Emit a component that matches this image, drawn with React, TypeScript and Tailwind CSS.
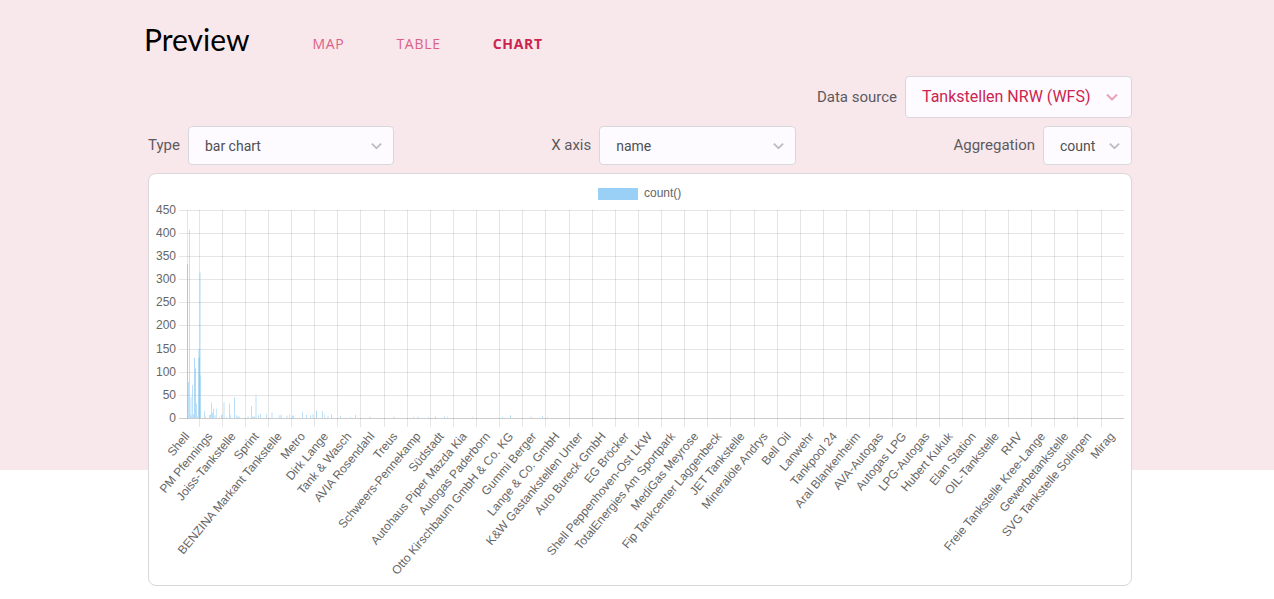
import React from "react";

const TABS = ["Map", "Table", "Chart"];

const LABELS = [
  "Shell",
  "PM Pfennings",
  "Joiss-Tankstelle",
  "Sprint",
  "BENZINA Markant Tankstelle",
  "Metro",
  "Dirk Lange",
  "Tank & Wasch",
  "AVIA Rosendahl",
  "Treus",
  "Schweers-Pennekamp",
  "Südstadt",
  "Autohaus Piper Mazda Kia",
  "Autogas Paderborn",
  "Otto Kirschbaum GmbH & Co. KG",
  "Gummi Berger",
  "Lange & Co. GmbH",
  "K&W Gastankstellen Unter",
  "Auto Bureck GmbH",
  "EG Bröcker",
  "Shell Peppenhoven-Ost LKW",
  "TotalEnergies Am Sportpark",
  "MediGas Meyrose",
  "Fip Tankcenter Laggenbeck",
  "JET Tankstelle",
  "Mineralöle Andrys",
  "Bell Oil",
  "Lanwehr",
  "Tankpool 24",
  "Aral Blankenheim",
  "AVA-Autogas",
  "Autogas LPG",
  "LPG-Autogas",
  "Hubert Kukuk",
  "Elan Station",
  "OIL-Tankstelle",
  "RHV",
  "Freie Tankstelle Kree-Lange",
  "Gewerbetankstelle",
  "SVG Tankstelle Solingen",
  "Mirag",
];

// [offset along the axis, count, width, opacity]
const BARS: [number, number, number, number][] = [
  [0, 332, 1, 0.7],
  [1, 77, 1, 0.5],
  [2, 406, 1, 0.5],
  [3, 45, 2, 0.25],
  [3, 8, 1, 0.4],
  [4, 5, 1, 0.3],
  [5, 71, 1, 0.5],
  [6, 8, 1, 0.5],
  [7, 130, 1, 0.6],
  [8, 107, 1, 0.6],
  [9, 31, 1, 0.5],
  [10, 3, 1, 0.5],
  [11, 149, 2, 0.3],
  [11, 130, 2, 0.4],
  [12, 314, 2, 0.3],
  [12, 130, 1, 0.3],
  [13, 92, 1, 0.4],
  [17, 15, 1, 0.5],
  [18, 3, 1, 0.5],
  [22, 7, 2, 0.5],
  [24, 33, 1, 0.5],
  [25, 11, 1, 0.5],
  [26, 20, 1, 0.5],
  [27, 6, 2, 0.3],
  [29, 20, 1, 0.4],
  [32, 3, 1, 0.3],
  [34, 7, 1, 0.5],
  [35, 7, 1, 0.3],
  [36, 34, 2, 0.25],
  [39, 3, 1, 0.3],
  [42, 31, 1, 0.5],
  [43, 7, 1, 0.4],
  [47, 44, 1, 0.55],
  [49, 6, 1, 0.5],
  [50, 3, 3, 0.4],
  [60, 3, 2, 0.3],
  [64, 26, 1, 0.5],
  [65, 3, 3, 0.5],
  [68, 49, 2, 0.25],
  [71, 6, 1, 0.5],
  [73, 9, 1, 0.5],
  [79, 8, 1, 0.5],
  [84, 12, 2, 0.25],
  [91, 6, 3, 0.25],
  [94, 7, 1, 0.4],
  [99, 5, 2, 0.25],
  [102, 8, 1, 0.4],
  [105, 5, 2, 0.5],
  [115, 13, 1, 0.5],
  [119, 7, 1, 0.5],
  [123, 6, 1, 0.5],
  [125, 8, 2, 0.25],
  [129, 16, 1, 0.6],
  [135, 15, 1, 0.5],
  [137, 8, 1, 0.4],
  [140, 5, 2, 0.25],
  [144, 8, 1, 0.5],
  [153, 5, 1, 0.5],
  [163, 3, 1, 0.3],
  [168, 7, 1, 0.5],
  [182, 3, 2, 0.25],
  [206, 3, 2, 0.25],
  [226, 3, 1, 0.4],
  [230, 3, 2, 0.25],
  [241, 3, 1, 0.3],
  [248, 3, 1, 0.6],
  [257, 4, 1, 0.4],
  [260, 3, 1, 0.4],
  [285, 3, 1, 0.3],
  [315, 3, 1, 0.5],
  [323, 6, 1, 0.6],
  [343, 3, 2, 0.25],
  [355, 4, 1, 0.5],
  [360, 3, 1, 0.3],
  [886, 3, 2, 0.25],
];

const AXIS_X = 38;
const AXIS_Y = 244;
const UNIT = 208.5 / 450;
const STEP = 23.13;

function CountChart() {
  return (
    <svg
      viewBox="0 0 982 411"
      className="block h-auto w-full"
      fontFamily="'Liberation Sans', Arial, sans-serif"
      fontSize="12"
      fill="#666"
      role="img"
      aria-label="count() by name"
    >
      <rect x="449" y="14" width="40" height="12" fill="#9ad0f5" />
      <text x="495" y="23">count()</text>

      {/* Horizontal grid and value ticks */}
      {[0, 50, 100, 150, 200, 250, 300, 350, 400, 450].map((value) => {
        const y = Math.round(AXIS_Y - value * UNIT);
        return (
          <g key={value}>
            <rect x="30" y={y} width="945" height="1" fill="#000" opacity={value === 0 ? 0.2 : 0.1} />
            <text x="27" y={y + 4} textAnchor="end">
              {value}
            </text>
          </g>
        );
      })}

      {/* Vertical grid and category ticks */}
      {LABELS.map((label, i) => {
        const line = i === 0 ? AXIS_X : Math.floor(50 + (i - 1) * STEP);
        const x = AXIS_X + i * STEP;
        return (
          <g key={label}>
            <rect x={line} y="36" width="1" height={i === 0 ? 209 : 217} fill="#000" opacity="0.1" />
            <text textAnchor="end" transform={`translate(${x} 260) rotate(-50)`} y="4">
              {label}
            </text>
          </g>
        );
      })}

      {BARS.map(([x, count, width, opacity], i) => (
        <rect
          key={i}
          x={AXIS_X + x}
          y={AXIS_Y - count * UNIT}
          width={width}
          height={count * UNIT}
          fill="#7cc3f3"
          opacity={opacity}
        />
      ))}
    </svg>
  );
}

interface SelectFieldProps {
  id: string;
  label: string;
  options: string[];
  className: string;
  accent?: boolean;
}

const SelectField: React.FC<SelectFieldProps> = ({ id, label, options, className, accent }) => (
  <div className="flex items-center gap-2">
    <label htmlFor={id} className="text-[15px] text-[#5b5b5f]">
      {label}
    </label>
    <div className={`relative ${className}`}>
      <select
        id={id}
        className={`h-full w-full appearance-none rounded border border-[#d9d7dc] bg-[#fdfbff] pl-4 pr-8 ${
          accent ? "text-base text-[#cc2450]" : "text-sm text-[#4f4f53]"
        }`}
      >
        {options.map((option) => (
          <option key={option}>{option}</option>
        ))}
      </select>
      <svg
        viewBox="0 0 12 8"
        fill="none"
        strokeWidth="2"
        className={`pointer-events-none absolute top-1/2 -translate-y-1/2 ${
          accent ? "right-3.5 w-3 stroke-[#e9a3b8]" : "right-3 w-[11px] stroke-[#bcb9c0]"
        }`}
      >
        <path d="M1 1.5 6 6.5 11 1.5" />
      </svg>
    </div>
  </div>
);

export default function App() {
  return (
    <div className="min-h-screen bg-[linear-gradient(#f9e8eb_470px,#fff_470px)] px-4 font-[Roboto,sans-serif]">
      <main className="mx-auto max-w-[990px] pb-3">
        <header className="flex items-end pl-0.5 pt-[19px]">
          <h1 className="font-[Lato,sans-serif] text-[30px] leading-10 text-black">Preview</h1>
          <nav className="ml-[63px] flex gap-[52px] pb-[5px] font-['Open_Sans',sans-serif] text-sm uppercase tracking-wider">
            {TABS.map((tab) => (
              <a
                key={tab}
                href={`#${tab.toLowerCase()}`}
                className={tab === "Chart" ? "font-bold text-[#cc2450]" : "text-[#dc6088]"}
              >
                {tab}
              </a>
            ))}
          </nav>
        </header>

        <div className="flex flex-col gap-2 pl-1.5 pt-[17px]">
          <div className="flex justify-end">
            <SelectField
              id="source"
              label="Data source"
              options={["Tankstellen NRW (WFS)"]}
              className="h-[42px] w-[227px]"
              accent
            />
          </div>
          <div className="flex flex-wrap justify-between gap-y-2">
            <SelectField id="type" label="Type" options={["bar chart"]} className="h-[39px] w-[206px]" />
            <SelectField id="axis" label="X axis" options={["name"]} className="h-[39px] w-[197px]" />
            <SelectField id="aggregation" label="Aggregation" options={["count"]} className="h-[39px] w-[89px]" />
          </div>
          <section className="rounded-lg border border-[#d9d7dc] bg-white">
            <CountChart />
          </section>
        </div>
      </main>
    </div>
  );
}
